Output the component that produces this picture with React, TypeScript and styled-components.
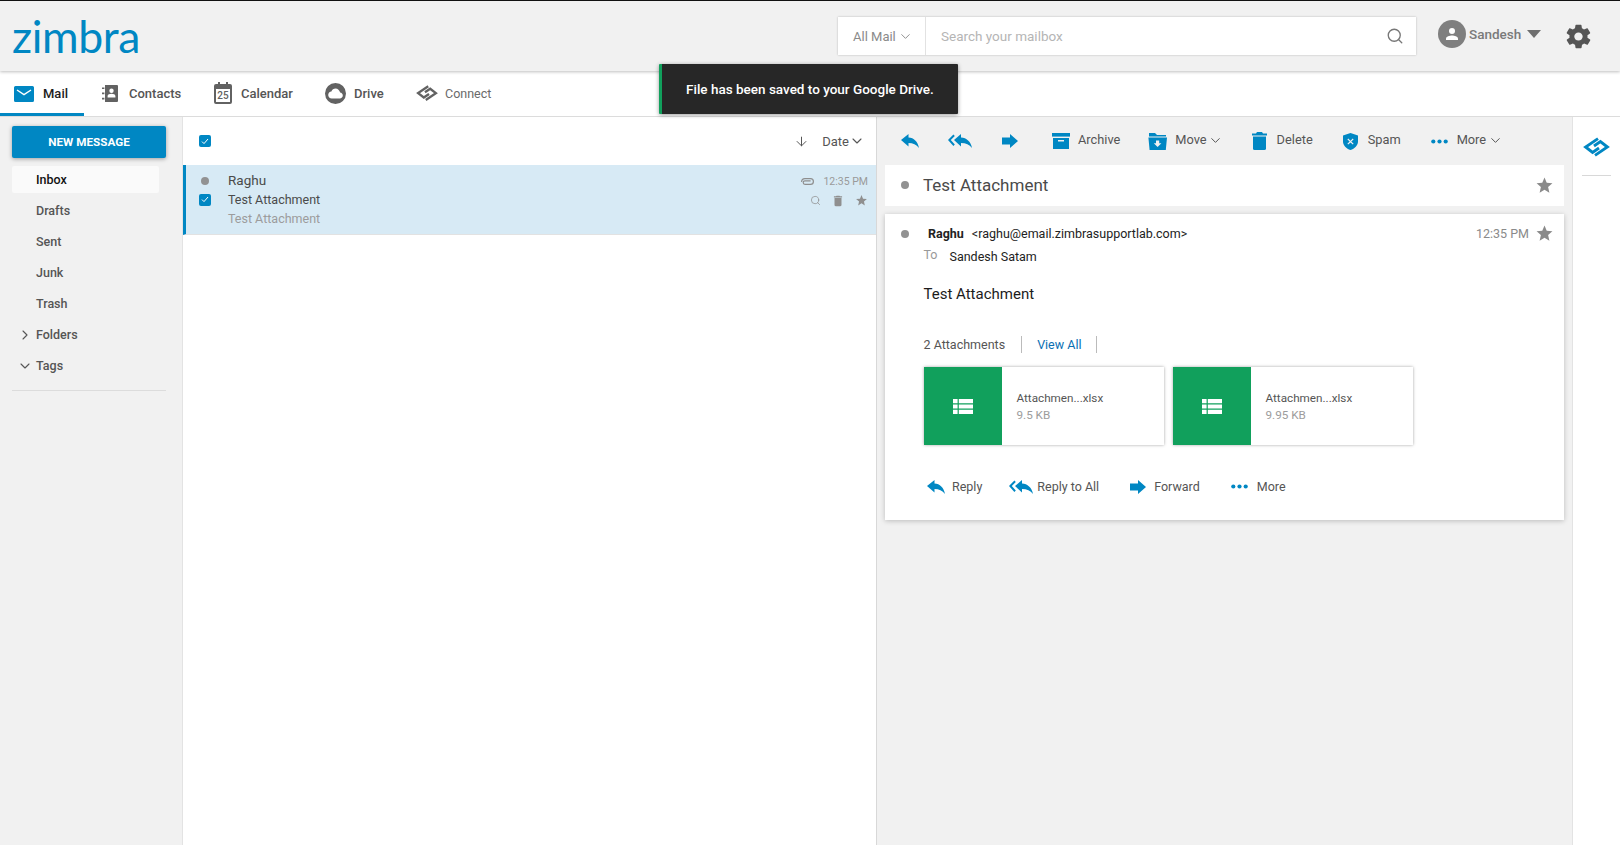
import styled, { createGlobalStyle } from "styled-components";
import { Search as SearchIcon, ChevronDown, ChevronRight, ArrowDown } from "lucide-react";
import { MdStar, MdDelete } from "react-icons/md";
import { IoMdSettings } from "react-icons/io";

const BLUE = "#0087c3";

const GlobalStyle = createGlobalStyle`
  html, body {
    margin: 0;
    padding: 0;
    height: 100%;
    overflow: hidden;
    background: #fff;
    font-family: Roboto, "Liberation Sans", sans-serif;
    color: #4a4a4a;
  }
  * { box-sizing: border-box; }
`;

const Icon = styled.svg<{ clr?: string }>`
  display: block;
  flex: none;
  fill: ${({ clr }) => clr || BLUE};
`;

const ReplyArrow = ({ size = 18 }: { size?: number }) => (
  <Icon width={size} height={(size * 14) / 18} viewBox="0 0 18 14">
    <path d="M0 6 L7.5 0 V3.6 C13 4 16.6 7.4 18 14 C15.4 10.6 12 9 7.5 9 V12.4 Z" />
  </Icon>
);

const ReplyAllArrow = ({ size = 24 }: { size?: number }) => (
  <Icon width={size} height={(size * 14) / 24} viewBox="0 0 24 14">
    <path d="M6 6 L13 0 V3.6 C18.6 4 22.6 7.4 24 14 C21.4 10.6 18 9 13 9 V12.4 Z" />
    <path d="M5.4 0.6 L6.8 2 L2.8 6 L6.8 10.6 L5.4 12 L0 6 Z" />
  </Icon>
);

const ForwardArrow = ({ size = 16 }: { size?: number }) => (
  <Icon width={size} height={(size * 14) / 16} viewBox="0 0 16 14">
    <path d="M0 3.5 H8 V0 L16 7 L8 14 V10.5 H0 Z" />
  </Icon>
);

const ArchiveGlyph = () => (
  <Icon width={18} height={16} viewBox="0 0 18 16">
    <path d="M0 0 H18 V3.6 H0 Z" />
    <path d="M1 5 H17 V16 H1 Z M6 7 V8.6 H12 V7 Z" fillRule="evenodd" />
  </Icon>
);

const MoveGlyph = () => (
  <Icon width={19} height={17} viewBox="0 0 19 17">
    <path d="M1 0 H7 L9 2 H18 V3.4 H1 Z" />
    <path d="M0.4 4.6 H19 L17.8 17 H1.6 Z M8 7.6 V10.2 H5.8 L9.6 14 L13.4 10.2 H11.2 V7.6 Z" fillRule="evenodd" />
  </Icon>
);

const TrashGlyph = () => (
  <Icon width={15} height={18} viewBox="0 0 15 18">
    <path d="M5 0 H10 L11 1.4 H15 V3.4 H0 V1.4 H4 Z" />
    <path d="M1 4.6 H14 V16.4 A1.6 1.6 0 0 1 12.4 18 H2.6 A1.6 1.6 0 0 1 1 16.4 Z" />
  </Icon>
);

const ShieldGlyph = () => (
  <Icon width={15} height={17} viewBox="0 0 15 17">
    <path
      d="M7.5 0 L15 2.4 V8.5 C15 12.6 11.6 15.6 7.5 17 C3.4 15.6 0 12.6 0 8.5 V2.4 Z M5.2 5.6 L4.4 6.4 L6.7 8.6 L4.4 10.8 L5.2 11.6 L7.5 9.4 L9.8 11.6 L10.6 10.8 L8.3 8.6 L10.6 6.4 L9.8 5.6 L7.5 7.8 Z"
      fillRule="evenodd"
    />
  </Icon>
);

const DotsGlyph = () => (
  <Icon width={17} height={5} viewBox="0 0 17 5">
    <circle cx="2.3" cy="2.5" r="2.1" />
    <circle cx="8.5" cy="2.5" r="2.1" />
    <circle cx="14.7" cy="2.5" r="2.1" />
  </Icon>
);

const ConnectStroke = styled.g<{ clr?: string }>`
  fill: none;
  stroke: ${({ clr }) => clr || BLUE};
  stroke-width: 2.9;
`;

const ConnectGlyph = ({ clr, size = 27 }: { clr?: string; size?: number }) => (
  <Icon width={size} height={(size * 20) / 27} viewBox="0 0 27 20" clr="none">
    <ConnectStroke clr={clr}>
      <path d="M15 1.6 L2.6 10 L9.6 15.4 L16 11" />
      <path d="M12 18.4 L24.4 10 L17.4 4.6 L11 9" />
    </ConnectStroke>
  </Icon>
);

const MailGlyph = () => (
  <Icon width={20} height={16} viewBox="0 0 20 16">
    <path
      d="M1.5 0 H18.5 A1.5 1.5 0 0 1 20 1.5 V14.5 A1.5 1.5 0 0 1 18.5 16 H1.5 A1.5 1.5 0 0 1 0 14.5 V1.5 A1.5 1.5 0 0 1 1.5 0 Z M3.4 3.4 L2.6 4.6 L10 9.6 L17.4 4.6 L16.6 3.4 L10 7.8 Z"
      fillRule="evenodd"
    />
  </Icon>
);

const ContactsGlyph = () => (
  <Icon width={16} height={17} viewBox="0 0 16 17" clr="#626262">
    <path
      d="M3 0 H15 A1 1 0 0 1 16 1 V16 A1 1 0 0 1 15 17 H3 Z M9.5 3.6 A2.2 2.2 0 1 0 9.5 8 A2.2 2.2 0 1 0 9.5 3.6 Z M5.6 12.6 H13.4 V11 C13.4 9.6 11.4 8.8 9.5 8.8 C7.6 8.8 5.6 9.6 5.6 11 Z"
      fillRule="evenodd"
    />
    <path d="M0 2.4 H2.4 V4 H0 Z M0 7.6 H2.4 V9.2 H0 Z M0 12.8 H2.4 V14.4 H0 Z" />
  </Icon>
);

const CalendarBox = styled.div`
  position: relative;
  width: 18px;
  height: 20px;
  flex: none;
  border: 2px solid #626262;
  border-top-width: 5px;
  border-radius: 2px;
  background: #fff;
  &::before,
  &::after {
    content: "";
    position: absolute;
    top: -7px;
    width: 2px;
    height: 4px;
    background: #626262;
  }
  &::before {
    left: 2px;
  }
  &::after {
    right: 2px;
  }
`;

const CalendarDay = styled.span`
  display: block;
  text-align: center;
  font-size: 10px;
  line-height: 13px;
  font-weight: 500;
  color: #626262;
`;

const DriveGlyph = () => (
  <Icon width={21} height={21} viewBox="0 0 21 21" clr="#626262">
    <path
      d="M10.5 0 A10.5 10.5 0 1 0 10.5 21 A10.5 10.5 0 1 0 10.5 0 Z M10.6 5.6 C8.6 5.6 7 6.8 6.4 8.6 C4.6 8.8 3.2 10.2 3.2 12 C3.2 13.9 4.8 15.4 6.7 15.4 H14.8 C16.4 15.4 17.8 14.1 17.8 12.5 C17.8 11 16.6 9.8 15.1 9.6 C14.6 7.4 12.8 5.6 10.6 5.6 Z"
      fillRule="evenodd"
    />
  </Icon>
);

const PaperclipGlyph = () => (
  <Icon width={13} height={8} viewBox="0 0 13 8" clr="#8e8e8e">
    <path d="M4 0 H9.5 A3.5 3.5 0 0 1 9.5 7 H4 A2.4 2.4 0 0 1 4 2.2 H9.6 V3.4 H4 A1.2 1.2 0 0 0 4 5.8 H9.5 A2.3 2.3 0 0 0 9.5 1.2 H4 A2.8 2.8 0 0 0 1.2 4 H0 A4 4 0 0 1 4 0 Z" />
  </Icon>
);

const SheetGlyph = () => (
  <Icon width={20} height={15} viewBox="0 0 20 15" clr="#fff">
    <path d="M0 0 H4.6 V4.2 H0 Z M5.8 0 H20 V4.2 H5.8 Z M0 5.4 H4.6 V9.6 H0 Z M5.8 5.4 H20 V9.6 H5.8 Z M0 10.8 H4.6 V15 H0 Z M5.8 10.8 H20 V15 H5.8 Z" />
  </Icon>
);

const Page = styled.div`
  position: relative;
  width: 100%;
  height: 845px;
  display: flex;
  flex-direction: column;
  overflow: hidden;
`;

const Header = styled.header`
  height: 71px;
  flex: none;
  display: flex;
  align-items: center;
  background: #f1f1f1;
  border-top: 1px solid #111;
  box-shadow: 0 1px 3px rgba(0, 0, 0, 0.25);
  position: relative;
  z-index: 2;
`;

const Logo = styled.div`
  margin: -1px 0 0 12px;
  width: 826px;
  font-family: Lato, sans-serif;
  font-size: 44.5px;
  line-height: 46px;
  letter-spacing: -0.4px;
  color: ${BLUE};
`;

const SearchBar = styled.div`
  width: 578px;
  height: 38px;
  display: flex;
  align-items: center;
  background: #fff;
  box-shadow: 0 0 2px rgba(0, 0, 0, 0.25);
`;

const ScopeSelect = styled.div`
  width: 88px;
  height: 100%;
  display: flex;
  align-items: center;
  gap: 2px;
  padding-left: 15px;
  font-size: 13px;
  color: #8a8a8a;
  border-right: 1px solid #e2e2e2;
`;

const SearchInput = styled.div`
  flex: 1;
  padding-left: 15px;
  font-size: 13.5px;
  color: #b5b5b5;
`;

const SearchGlass = styled(SearchIcon)`
  margin-right: 12px;
  color: #777;
`;

const UserMenu = styled.div`
  margin: -5px 0 0 22px;
  display: flex;
  align-items: center;
  gap: 3px;
  font-size: 13.5px;
  font-weight: 500;
  color: #7a7a7a;
`;

const Avatar = styled.div`
  width: 28px;
  height: 28px;
  border-radius: 50%;
  background: #7f7f7f;
  display: flex;
  align-items: center;
  justify-content: center;
`;

const Caret = styled.span`
  width: 0;
  height: 0;
  margin-left: 3px;
  border-left: 7px solid transparent;
  border-right: 7px solid transparent;
  border-top: 8px solid #6f6f6f;
`;

const Gear = styled(IoMdSettings)`
  margin-left: 23px;
  font-size: 29px;
  color: #555;
`;

const Tabs = styled.nav`
  height: 46px;
  flex: none;
  display: flex;
  align-items: stretch;
  background: #fff;
  border-bottom: 1px solid #dcdcdc;
`;

const Tab = styled.div<{ active?: boolean; w: number; gap: number }>`
  width: ${({ w }) => w}px;
  display: flex;
  align-items: center;
  padding-left: ${({ active }) => (active ? 14 : 0)}px;
  gap: ${({ gap }) => gap}px;
  font-size: 13px;
  font-weight: 500;
  color: ${({ active }) => (active ? "#1c1c1c" : "#555")};
  box-shadow: ${({ active }) => (active ? `inset 0 -3px 0 ${BLUE}` : "none")};
  margin-right: ${({ active }) => (active ? 18 : 0)}px;
`;

const TabText = styled.span`
  font-size: 12.5px;
  font-weight: 400;
  color: #6a6a6a;
`;

const Body = styled.div`
  flex: 1;
  display: flex;
  min-height: 0;
`;

const Sidebar = styled.aside`
  width: 183px;
  flex: none;
  padding: 9px 0 0 12px;
  background: #f1f1f1;
  border-right: 1px solid #e3e3e3;
`;

const NewMessage = styled.button`
  display: block;
  width: 154px;
  height: 32px;
  margin: 0 0 8px;
  padding: 0;
  border: 0;
  border-radius: 2px;
  background: ${BLUE};
  color: #fff;
  font-family: inherit;
  font-size: 11.7px;
  font-weight: 700;
  box-shadow: 0 1px 4px rgba(0, 0, 0, 0.35);
`;

const FolderRow = styled.div<{ active?: boolean }>`
  position: relative;
  width: 147px;
  height: 27px;
  margin-bottom: 4px;
  display: flex;
  align-items: center;
  padding-left: 24px;
  border-radius: 2px;
  font-size: 12.5px;
  font-weight: 500;
  color: ${({ active }) => (active ? "#111" : "#555")};
  background: ${({ active }) => (active ? "#fafafa" : "transparent")};
`;

const FolderToggle = styled.span`
  position: absolute;
  left: 5px;
  top: 6px;
  display: flex;
  color: #555;
`;

const SideRule = styled.hr`
  width: 154px;
  height: 1px;
  margin: 11px 0 0;
  border: 0;
  background: #dcdcdc;
`;

const MailList = styled.section`
  width: 694px;
  flex: none;
  display: flex;
  flex-direction: column;
  background: #fff;
  border-right: 1px solid #d8d8d8;
`;

const ListHead = styled.div`
  height: 48px;
  flex: none;
  display: flex;
  align-items: center;
  padding: 0 11px 0 16px;
  font-size: 13px;
  color: #555;
`;

const CheckBox = styled.span`
  width: 12px;
  height: 12px;
  flex: none;
  border-radius: 2px;
  background: ${BLUE};
  display: flex;
  align-items: center;
  justify-content: center;
`;

const SortArrow = styled(ArrowDown)`
  margin-left: auto;
  margin-right: 13px;
  color: #555;
`;

const MailRow = styled.div`
  height: 70px;
  flex: none;
  display: grid;
  grid-template-columns: 12px 1fr auto;
  grid-template-rows: 19px 19px 19px;
  column-gap: 17px;
  align-content: center;
  align-items: center;
  padding: 0 8px 0 13px;
  background: #d7eaf5;
  border-left: 3px solid ${BLUE};
  border-bottom: 1px solid #e2e2e2;
  font-size: 12.5px;
`;

const Dot = styled.span<{ size?: number }>`
  width: ${({ size }) => size || 8}px;
  height: ${({ size }) => size || 8}px;
  flex: none;
  border-radius: 50%;
  background: #929292;
`;

const RowCellDot = styled(Dot)`
  justify-self: center;
`;

const RowMeta = styled.div`
  display: flex;
  align-items: center;
  justify-content: flex-end;
  gap: 9px;
  padding-top: 2px;
  font-size: 10.5px;
  color: #9a9a9a;
`;

const RowActions = styled(RowMeta)`
  gap: 10px;
  color: #8f8f8f;
`;

const Sender = styled.span`
  margin-top: -1px;
  color: #4a4a4a;
  font-size: 13.5px;
`;

const RowText = styled.span<{ muted?: boolean }>`
  color: ${({ muted }) => (muted ? "#9c9c9c" : "#4a4a4a")};
`;

const Reader = styled.section`
  flex: 1;
  min-width: 0;
  display: flex;
  flex-direction: column;
  background: #f1f1f1;
  padding: 0 8px;
`;

const Toolbar = styled.div`
  height: 48px;
  flex: none;
  display: flex;
  align-items: center;
  padding-left: 16px;
  font-size: 12.8px;
  color: #555;
`;

const ToolIcon = styled.span<{ mr: number }>`
  display: flex;
  margin-right: ${({ mr }) => mr}px;
`;

const ToolButton = styled.span<{ mr: number; gap?: number }>`
  display: flex;
  align-items: center;
  gap: ${({ gap }) => gap || 8}px;
  margin-right: ${({ mr }) => mr}px;
  color: #555;
`;

const ToolLabel = styled.span`
  margin-bottom: 4px;
`;

const ToolChevron = styled(ChevronDown)`
  margin: 0 0 2px -7px;
  color: #555;
`;

const SubjectCard = styled.div`
  height: 41px;
  flex: none;
  display: flex;
  align-items: center;
  padding: 0 10px 1px 16px;
  background: #fff;
  font-size: 17px;
  color: #4a4a4a;
`;

const SubjectText = styled.span`
  margin-left: 14px;
  flex: 1;
`;

const Star = styled(MdStar)`
  color: #8a8a8a;
  font-size: 19px;
`;

const MessageCard = styled.article`
  height: 306px;
  margin-top: 8px;
  flex: none;
  padding: 10px 10px 0 16px;
  background: #fff;
  box-shadow: 0 1px 5px rgba(0, 0, 0, 0.22);
`;

const FromRow = styled.div`
  display: flex;
  align-items: center;
  font-size: 12.5px;
  color: #222;
`;

const FromName = styled.strong`
  margin: 0 8px 0 19px;
  font-weight: 700;
  color: #222;
`;

const Stamp = styled.span`
  margin: 0 6px 0 auto;
  color: #8a8a8a;
`;

const ToRow = styled.div`
  display: flex;
  align-items: center;
  margin: 6px 0 0 22.5px;
  font-size: 12.5px;
  color: #222;
`;

const ToLabel = styled.span`
  width: 26px;
  margin-top: -4px;
  color: #999;
`;

const BodyText = styled.p`
  margin: 20px 0 0 22.5px;
  font-size: 15px;
  line-height: 20px;
  color: #1c1c1c;
`;

const AttachHead = styled.div`
  display: flex;
  align-items: center;
  margin: 32px 0 0 22.5px;
  font-size: 12.5px;
  color: #555;
`;

const AttachLink = styled.span`
  padding: 1px 15px 0;
  margin-left: 16px;
  line-height: 16px;
  color: #0a6fb3;
  border-left: 1px solid #bbb;
  border-right: 1px solid #bbb;
`;

const AttachRow = styled.div`
  display: flex;
  gap: 9px;
  margin: 14px 0 0 22.5px;
`;

const AttachCard = styled.div`
  width: 240px;
  height: 78px;
  display: flex;
  background: #fff;
  box-shadow: 0 0 3px rgba(0, 0, 0, 0.35);
`;

const AttachThumb = styled.div`
  width: 78px;
  flex: none;
  display: flex;
  align-items: center;
  justify-content: center;
  background: #11a05c;
`;

const AttachInfo = styled.div`
  padding: 23px 0 0 15px;
  font-size: 11.7px;
  line-height: 17px;
  color: #555;
`;

const AttachSize = styled.div`
  color: #9c9c9c;
`;

const ReplyBar = styled.div`
  display: flex;
  align-items: center;
  margin: 34px 0 0 25.5px;
  font-size: 12.5px;
  color: #555;
`;

const ReplyAction = styled.span<{ mr: number; gap: number }>`
  display: flex;
  align-items: center;
  gap: ${({ gap }) => gap}px;
  margin-right: ${({ mr }) => mr}px;
`;

const Rail = styled.aside`
  width: 48px;
  flex: none;
  display: flex;
  flex-direction: column;
  align-items: center;
  padding-top: 20px;
  background: #fff;
  border-left: 1px solid #e3e3e3;
`;

const RailRule = styled.hr`
  width: 29px;
  height: 1px;
  margin: 18px 0 0;
  border: 0;
  background: #d8d8d8;
`;

const Toast = styled.div`
  position: absolute;
  top: 64px;
  left: 659px;
  z-index: 5;
  width: 299px;
  height: 50px;
  display: flex;
  align-items: center;
  padding-left: 24px;
  background: #272727;
  border-left: 3px solid #11a05c;
  border-radius: 1px;
  box-shadow: 0 1px 4px rgba(0, 0, 0, 0.4);
  color: #fff;
  font-size: 13.5px;
  font-weight: 500;
`;

const Check = () => (
  <Icon width={8} height={7} viewBox="0 0 8 7" clr="none">
    <path d="M1 3.6 L3 5.6 L7 1" stroke="#fff" strokeWidth="1" fill="none" />
  </Icon>
);

const folders = ["Drafts", "Sent", "Junk", "Trash"];

export default function App() {
  return (
    <Page>
      <GlobalStyle />
      <Header>
        <Logo>zimbra</Logo>
        <SearchBar>
          <ScopeSelect>
            All Mail
            <ChevronDown size={15} strokeWidth={1.5} />
          </ScopeSelect>
          <SearchInput>Search your mailbox</SearchInput>
          <SearchGlass size={18} strokeWidth={1.8} />
        </SearchBar>
        <UserMenu>
          <Avatar>
            <Icon width={14} height={14} viewBox="0 0 14 14" clr="#fff">
              <circle cx="7" cy="4" r="3" />
              <path d="M1 13 V11.4 C1 9.4 4.6 8.4 7 8.4 C9.4 8.4 13 9.4 13 11.4 V13 Z" />
            </Icon>
          </Avatar>
          Sandesh
          <Caret />
        </UserMenu>
        <Gear />
      </Header>

      <Tabs>
        <Tab active w={84} gap={9}>
          <MailGlyph />
          Mail
        </Tab>
        <Tab w={112} gap={11}>
          <ContactsGlyph />
          Contacts
        </Tab>
        <Tab w={111} gap={9}>
          <CalendarBox>
            <CalendarDay>25</CalendarDay>
          </CalendarBox>
          Calendar
        </Tab>
        <Tab w={91} gap={8}>
          <DriveGlyph />
          Drive
        </Tab>
        <Tab w={90} gap={7}>
          <ConnectGlyph clr="#626262" size={22} />
          <TabText>Connect</TabText>
        </Tab>
      </Tabs>

      <Body>
        <Sidebar>
          <NewMessage>NEW MESSAGE</NewMessage>
          <FolderRow active>Inbox</FolderRow>
          {folders.map((name) => (
            <FolderRow key={name}>{name}</FolderRow>
          ))}
          <FolderRow>
            <FolderToggle>
              <ChevronRight size={16} strokeWidth={1.6} />
            </FolderToggle>
            Folders
          </FolderRow>
          <FolderRow>
            <FolderToggle>
              <ChevronDown size={16} strokeWidth={1.6} />
            </FolderToggle>
            Tags
          </FolderRow>
          <SideRule />
        </Sidebar>

        <MailList>
          <ListHead>
            <CheckBox>
              <Check />
            </CheckBox>
            <SortArrow size={15} strokeWidth={1.6} />
            Date
            <ChevronDown size={16} strokeWidth={1.6} />
          </ListHead>
          <MailRow>
            <RowCellDot />
            <Sender>Raghu</Sender>
            <RowMeta>
              <PaperclipGlyph />
              12:35 PM
            </RowMeta>
            <CheckBox>
              <Check />
            </CheckBox>
            <RowText>Test Attachment</RowText>
            <RowActions>
              <SearchIcon size={11} strokeWidth={1.6} />
              <MdDelete size={14} />
              <MdStar size={13} />
            </RowActions>
            <span />
            <RowText muted>Test Attachment</RowText>
          </MailRow>
        </MailList>

        <Reader>
          <Toolbar>
            <ToolIcon mr={29}>
              <ReplyArrow />
            </ToolIcon>
            <ToolIcon mr={30}>
              <ReplyAllArrow />
            </ToolIcon>
            <ToolIcon mr={34}>
              <ForwardArrow />
            </ToolIcon>
            <ToolButton mr={28}>
              <ArchiveGlyph />
              <ToolLabel>Archive</ToolLabel>
            </ToolButton>
            <ToolButton mr={29}>
              <MoveGlyph />
              <ToolLabel>Move</ToolLabel>
              <ToolChevron size={15} strokeWidth={1.6} />
            </ToolButton>
            <ToolButton mr={30} gap={10}>
              <TrashGlyph />
              <ToolLabel>Delete</ToolLabel>
            </ToolButton>
            <ToolButton mr={30} gap={10}>
              <ShieldGlyph />
              <ToolLabel>Spam</ToolLabel>
            </ToolButton>
            <ToolButton mr={0} gap={9}>
              <DotsGlyph />
              <ToolLabel>More</ToolLabel>
              <ToolChevron size={15} strokeWidth={1.6} />
            </ToolButton>
          </Toolbar>

          <SubjectCard>
            <Dot />
            <SubjectText>Test Attachment</SubjectText>
            <Star />
          </SubjectCard>

          <MessageCard>
            <FromRow>
              <Dot />
              <FromName>Raghu</FromName>
              &lt;raghu@email.zimbrasupportlab.com&gt;
              <Stamp>12:35 PM</Stamp>
              <Star />
            </FromRow>
            <ToRow>
              <ToLabel>To</ToLabel>
              Sandesh Satam
            </ToRow>
            <BodyText>Test Attachment</BodyText>
            <AttachHead>
              2 Attachments
              <AttachLink>View All</AttachLink>
            </AttachHead>
            <AttachRow>
              <AttachCard>
                <AttachThumb>
                  <SheetGlyph />
                </AttachThumb>
                <AttachInfo>
                  Attachmen...xlsx
                  <AttachSize>9.5 KB</AttachSize>
                </AttachInfo>
              </AttachCard>
              <AttachCard>
                <AttachThumb>
                  <SheetGlyph />
                </AttachThumb>
                <AttachInfo>
                  Attachmen...xlsx
                  <AttachSize>9.95 KB</AttachSize>
                </AttachInfo>
              </AttachCard>
            </AttachRow>
            <ReplyBar>
              <ReplyAction mr={27} gap={7.5}>
                <ReplyArrow />
                Reply
              </ReplyAction>
              <ReplyAction mr={31} gap={4}>
                <ReplyAllArrow />
                Reply to All
              </ReplyAction>
              <ReplyAction mr={31} gap={8}>
                <ForwardArrow />
                Forward
              </ReplyAction>
              <ReplyAction mr={0} gap={9}>
                <DotsGlyph />
                More
              </ReplyAction>
            </ReplyBar>
          </MessageCard>
        </Reader>

        <Rail>
          <ConnectGlyph />
          <RailRule />
        </Rail>
      </Body>

      <Toast>File has been saved to your Google Drive.</Toast>
    </Page>
  );
}
